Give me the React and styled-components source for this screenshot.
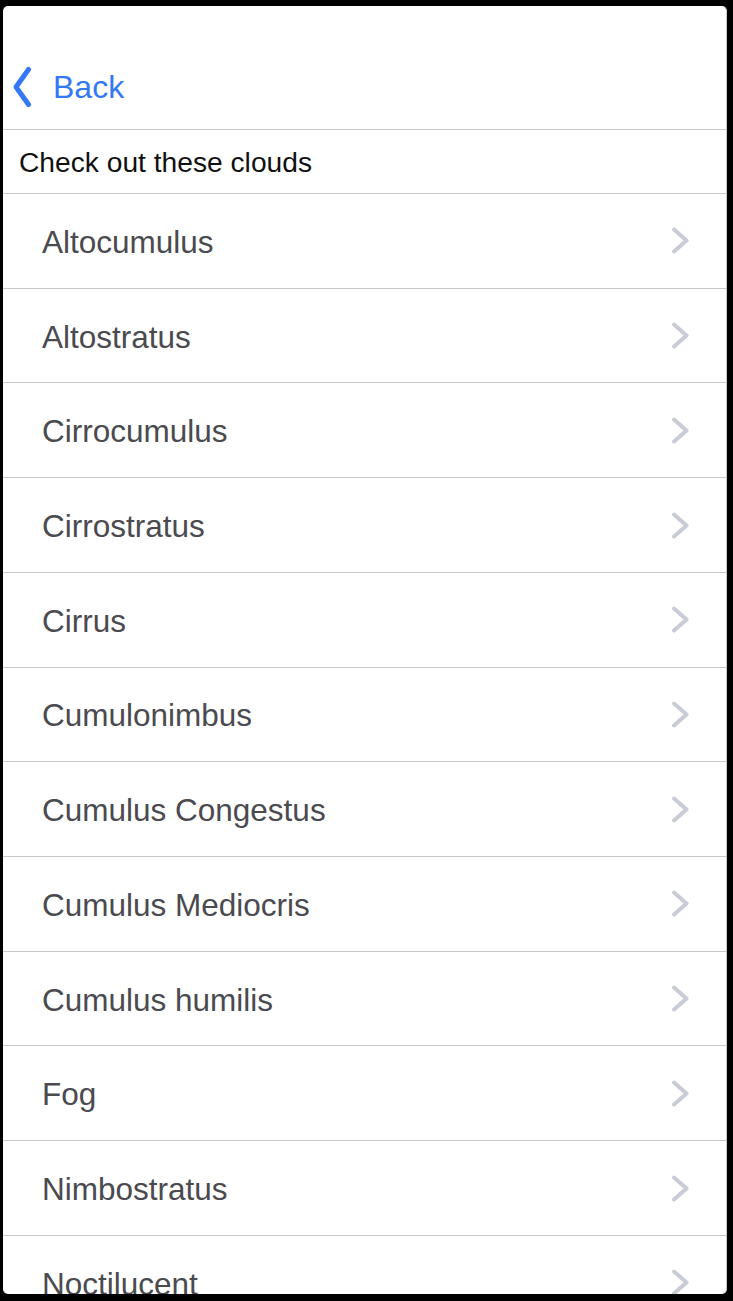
import React from 'react';
import styled, { createGlobalStyle } from 'styled-components';

const GlobalStyle = createGlobalStyle`
  html, body {
    margin: 0;
    padding: 0;
    background: #000;
  }
  body {
    font-family: "Liberation Sans", Arial, sans-serif;
    -webkit-font-smoothing: antialiased;
  }
`;

const Frame = styled.div`
  width: 733px;
  height: 1301px;
  box-sizing: border-box;
  padding: 6px 6px 7px 3px;
  background: #000;
  overflow: hidden;
`;

const Screen = styled.div`
  height: 100%;
  background: #fff;
  border-radius: 5px;
  border-right: 1px solid #c9c9c9;
  overflow: hidden;
  display: flex;
  flex-direction: column;
`;

const NavBar = styled.header`
  height: 124px;
  flex-shrink: 0;
  box-sizing: border-box;
  display: flex;
  align-items: flex-end;
  padding: 0 0 21px 9px;
  border-bottom: 1px solid #c8c8c8;
`;

const BackButton = styled.button`
  display: flex;
  align-items: center;
  gap: 21px;
  padding: 0;
  border: none;
  background: transparent;
  color: #3478f6;
  font-family: "Liberation Sans", Arial, sans-serif;
  font-size: 32px;
  line-height: 40px;
  cursor: pointer;
`;

const SectionTitle = styled.div`
  height: 64px;
  flex-shrink: 0;
  box-sizing: border-box;
  display: flex;
  align-items: center;
  padding: 1px 0 0 16px;
  border-bottom: 1px solid #c8c8c8;
  font-size: 28.2px;
  color: #111;
`;

const List = styled.ul`
  list-style: none;
  margin: 0;
  padding: 0;
`;

const Row = styled.li`
  height: 94.73px;
  box-sizing: border-box;
  display: flex;
  align-items: center;
  justify-content: space-between;
  padding: 0 36px 0 39px;
  border-bottom: 1px solid #c8c8c8;
`;

const RowLabel = styled.span`
  font-size: 31.5px;
  color: #4a4a4f;
  padding-top: 3px;
`;

const BackChevron = () => (
  <svg width="20" height="42" viewBox="0 0 20 42" fill="none">
    <path d="M16.5 3.5 L4 21 L16.5 38.5" stroke="#3478f6" strokeWidth="5" strokeLinecap="round" strokeLinejoin="round" />
  </svg>
);

const Chevron = () => (
  <svg width="19" height="27" viewBox="0 0 19 27" fill="none">
    <path d="M3 2.5 L15.5 13.5 L3 24.5" stroke="#c7ccd5" strokeWidth="4" strokeLinecap="round" strokeLinejoin="round" />
  </svg>
);

const clouds = [
  'Altocumulus',
  'Altostratus',
  'Cirrocumulus',
  'Cirrostratus',
  'Cirrus',
  'Cumulonimbus',
  'Cumulus Congestus',
  'Cumulus Mediocris',
  'Cumulus humilis',
  'Fog',
  'Nimbostratus',
  'Noctilucent',
];

export default function App() {
  return (
    <>
      <GlobalStyle />
      <Frame>
        <Screen>
          <NavBar>
            <BackButton type="button">
              <BackChevron />
              Back
            </BackButton>
          </NavBar>
          <SectionTitle>Check out these clouds</SectionTitle>
          <List>
            {clouds.map((name) => (
              <Row key={name}>
                <RowLabel>{name}</RowLabel>
                <Chevron />
              </Row>
            ))}
          </List>
        </Screen>
      </Frame>
    </>
  );
}
